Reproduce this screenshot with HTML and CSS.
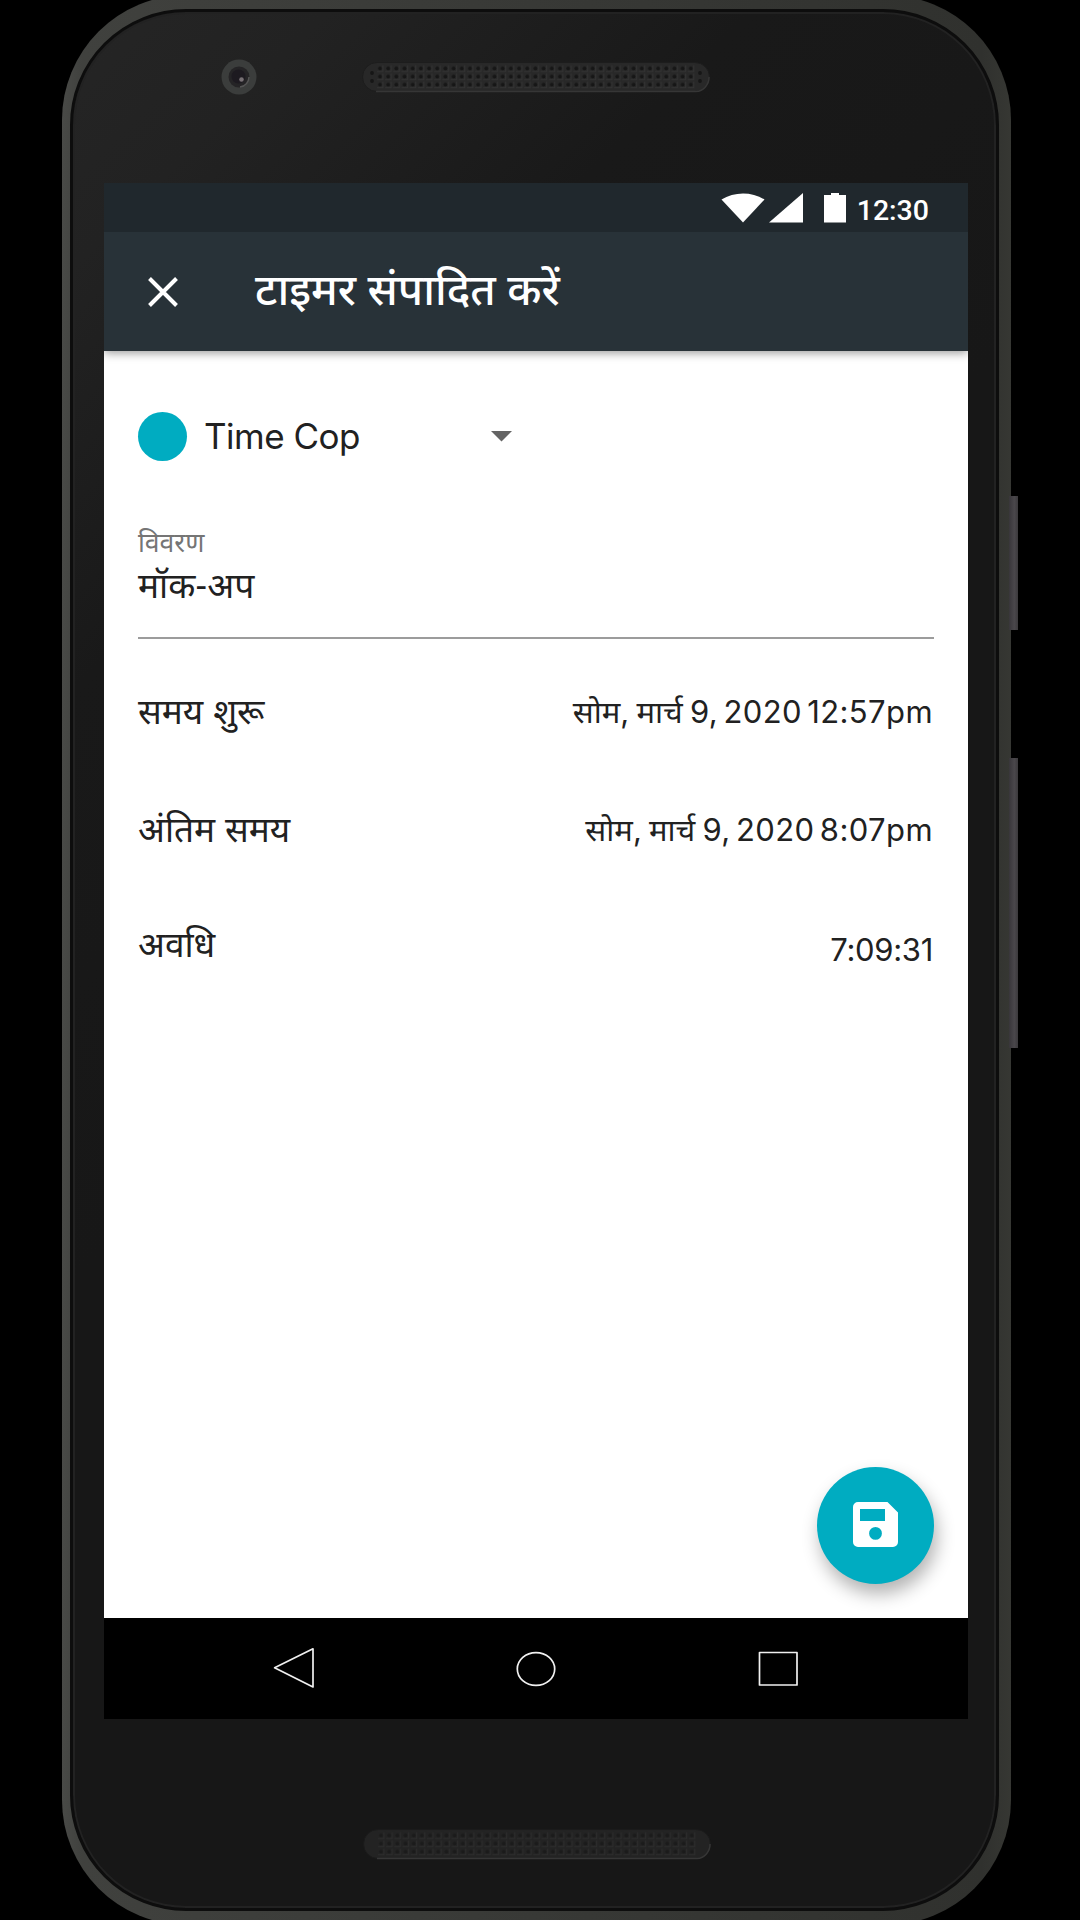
FILE: index.html
```html
<!DOCTYPE html>
<html lang="hi">
<head>
<meta charset="utf-8">
<title>टाइमर संपादित करें</title>
<link rel="stylesheet" href="styles.css">
</head>
<body>
<div class="phone">
  <span class="side-key side-key-power"></span>
  <span class="side-key side-key-volume"></span>
  <div class="face">
    <div class="bezel-top">
      <svg class="camera" width="36" height="36" viewBox="0 0 36 36">
        <circle cx="18" cy="18" r="17.500" fill="#3b3d3c"/>
        <circle cx="18" cy="18" r="10.500" fill="#252426"/>
        <path d="M19 28A10 10 0 0 0 28 18" fill="none" stroke="#555" stroke-width="1.500"/>
        <circle cx="17.500" cy="17.500" r="7" fill="#1d1a20"/>
        <circle cx="20.500" cy="20.500" r="2.300" fill="#777074"/>
      </svg>
      <svg class="speaker" width="348" height="31" viewBox="0 0 348 31">
        <defs>
          <pattern id="holes" x="14" y="2.500" width="8.180" height="8.100" patternUnits="userSpaceOnUse">
            <path d="M1 7H7V1" fill="none" stroke="#333" stroke-width="1"/>
            <circle cx="4" cy="4" r="1.900" fill="#161616"/>
          </pattern>
        </defs>
        <rect x=".5" y=".5" width="347" height="29" rx="14.500" fill="#282828" stroke="#1d1d1d"/>
        <path d="M14 29.500H334A14 14 0 0 0 347 15" fill="none" stroke="#363636" stroke-width="1.500"/>
        <rect x="14" y="2.500" width="319" height="24.300" fill="url(#holes)"/>
        <g fill="#161616"><circle cx="10" cy="11" r="1.900"/><circle cx="10" cy="19" r="1.900"/><circle cx="338" cy="11" r="1.900"/><circle cx="338" cy="19" r="1.900"/></g>
      </svg>
    </div>
    <main class="screen">
      <div class="status-bar">
        <svg class="wifi" width="44" height="30" viewBox="0 0 44 30"><path d="M22 29.500L.5 6.500C13-1.500 31-1.500 43.500 6.500Z" fill="#fff"/></svg>
        <svg class="signal" width="34" height="30" viewBox="0 0 34 30"><path d="M34 0V29.500H0Z" fill="#fff"/></svg>
        <svg class="battery" width="22" height="30" viewBox="0 0 22 30"><path d="M7 0H15V2H22V29.500H0V2H7Z" fill="#fff"/></svg>
        <span class="clock">12:30</span>
      </div>
      <header class="app-bar">
        <svg class="close" width="30" height="30" viewBox="0 0 30 30"><path d="M1.500 1.500L28.500 28.500M28.500 1.500L1.500 28.500" stroke="#fff" stroke-width="4"/></svg>
        <h1 class="title">टाइमर संपादित करें</h1>
      </header>
      <div class="content">
        <div class="project">
          <span class="dot"></span>
          <span class="project-name">Time Cop</span>
          <svg class="caret" width="21" height="11" viewBox="0 0 21 11"><path d="M0 0H21L10.500 10.500Z" fill="#646464"/></svg>
        </div>
        <div class="field">
          <label class="field-label">विवरण</label>
          <div class="field-value">मॉक-अप</div>
        </div>
        <div class="row"><span class="row-label">समय शुरू</span><span class="row-value">सोम, मार्च <span class="digits">9, 2020 12:57pm</span></span></div>
        <div class="row"><span class="row-label">अंतिम समय</span><span class="row-value">सोम, मार्च <span class="digits">9, 2020 8:07pm</span></span></div>
        <div class="row row-last"><span class="row-label">अवधि</span><span class="row-value">7:09:31</span></div>
        <button class="fab" aria-label="Save">
          <svg width="45" height="45" viewBox="0 0 45 45"><path fill-rule="evenodd" fill="#fff" d="M5 0H34.500L45 10.500V40a5 5 0 0 1-5 5H5a5 5 0 0 1-5-5V5a5 5 0 0 1 5-5ZM7 7V19H32V7ZM22.500 25a6.400 6.400 0 1 0 0 12.800a6.400 6.400 0 1 0 0-12.800Z"/></svg>
        </button>
      </div>
      <nav class="nav-bar">
        <svg width="46" height="46" viewBox="0 0 46 46"><path d="M42 3.800V42L3.600 22.800Z"/></svg>
        <svg width="46" height="46" viewBox="0 0 46 46"><ellipse cx="23" cy="24" rx="18.700" ry="16.400"/></svg>
        <svg width="46" height="46" viewBox="0 0 46 46"><rect x="4.500" y="7.500" width="37.500" height="32.500"/></svg>
      </nav>
    </main>
    <div class="bezel-bottom">
      <svg width="348" height="31" viewBox="0 0 348 31">
        <rect x=".5" y=".5" width="347" height="29" rx="14.500" fill="#232323" stroke="#1b1b1b"/>
        <path d="M14 29.500H334A14 14 0 0 0 347 15" fill="none" stroke="#363636" stroke-width="1.500"/>
        <rect x="14" y="2.500" width="319" height="24.300" fill="url(#holes)" opacity=".6"/>
      </svg>
    </div>
  </div>
</div>
</body>
</html>
```
FILE: styles.css
```css
* { box-sizing: border-box; }
body {
  margin: 0;
  width: 1080px;
  height: 1920px;
  overflow: hidden;
  background: #000;
  font-family: Inter, "Noto Sans Devanagari", "Noto Sans", sans-serif;
  color: #212121;
}
svg { display: block; flex: none; }
.phone {
  position: relative;
  width: 949px;
  height: 1930px;
  margin: -5px 0 0 62px;
  padding: 14px 12px 14px 8px;
  border-radius: 125px;
  background: linear-gradient(90deg, #494a47 0, #40413e 20px, #30312e 920px, #363733 100%);
}
.side-key {
  position: absolute;
  left: 947px;
  width: 9px;
  background: linear-gradient(90deg, #38363a, #4a474b 60%, #3b393c);
}
.side-key-power { top: 501px; height: 134px; }
.side-key-volume { top: 763px; height: 290px; }
.face {
  height: 1902px;
  border: 3px solid #0d0d0d;
  border-radius: 116px;
  background: linear-gradient(135deg, #252525 0, #222 180px, #191919 480px, #171717 900px);
  box-shadow: inset 0 0 0 2px #222;
  padding: 0 28px 0 31px;
}
.bezel-top {
  height: 171px;
  padding: 47px 0 0 117px;
  display: flex;
  align-items: flex-start;
  gap: 105px;
}
.speaker { margin-top: 3px; }
.screen { width: 864px; height: 1536px; display: flex; flex-direction: column; }
.status-bar {
  height: 49px;
  background: #20282d;
  display: flex;
  align-items: flex-start;
  padding: 10px 39px 0 0;
  justify-content: flex-end;
}
.signal { margin-left: 4px; }
.battery { margin-left: 21px; }
.clock {
  margin: 0 0 0 11px;
  font: 500 28.500px/35px Roboto, sans-serif;
  color: #fff;
}
.app-bar {
  position: relative;
  z-index: 1;
  height: 119px;
  background: #283238;
  display: flex;
  align-items: center;
  padding-left: 44px;
  gap: 77px;
  box-shadow: 0 2px 9px rgba(0, 0, 0, .4);
  clip-path: inset(0 0 -20px 0);
}
.title {
  margin: 0 0 4px;
  font-size: 43.600px;
  line-height: 60px;
  font-weight: 500;
  color: #fff;
  white-space: nowrap;
}
.content {
  position: relative;
  height: 1267px;
  background: #fff;
  padding: 61px 34px 0;
}
.project { height: 49px; display: flex; align-items: center; }
.dot { width: 49px; height: 49px; border-radius: 50%; background: #00acc1; }
.project-name {
  margin: 0 0 2px 17px;
  width: 287px;
  font-size: 35px;
  line-height: 48px;
  letter-spacing: -.5px;
}
.field { height: 178px; border-bottom: 2px solid #9c9c9c; padding-top: 63px; }
.field-label { display: block; font-size: 26.500px; line-height: 36px; color: #757575; }
.field-value { font-size: 35.300px; line-height: 59px; font-family: "Noto Sans Devanagari", "Noto Sans", sans-serif; }
.row {
  display: flex;
  justify-content: space-between;
  align-items: center;
  height: 118px;
  padding-top: 27px;
  white-space: nowrap;
}
.row-label { font-size: 35.200px; line-height: 50px; margin-bottom: 1px; }
.row-value { font-size: 31px; line-height: 50px; word-spacing: -1.500px; margin-right: 1px; }
.digits { letter-spacing: .4px; word-spacing: -3.800px; }
.row-last .row-label { margin-bottom: 7px; }
.row-last .row-value { margin-top: 5px; letter-spacing: -.3px; }
.fab {
  position: absolute;
  right: 34px;
  bottom: 34px;
  width: 117px;
  height: 117px;
  padding: 0 0 3px;
  border: 0;
  border-radius: 50%;
  background: #00acc1;
  display: grid;
  place-items: center;
  box-shadow: 3px 10px 18px rgba(0, 0, 0, .3);
}
.nav-bar {
  height: 101px;
  background: #000;
  display: flex;
  justify-content: space-between;
  align-items: center;
  padding: 0 167px 1px;
}
.nav-bar svg { fill: none; stroke: #f0f0f0; stroke-width: 1.700; stroke-linejoin: round; }
.bezel-bottom { padding: 110px 0 0 259px; }
```
